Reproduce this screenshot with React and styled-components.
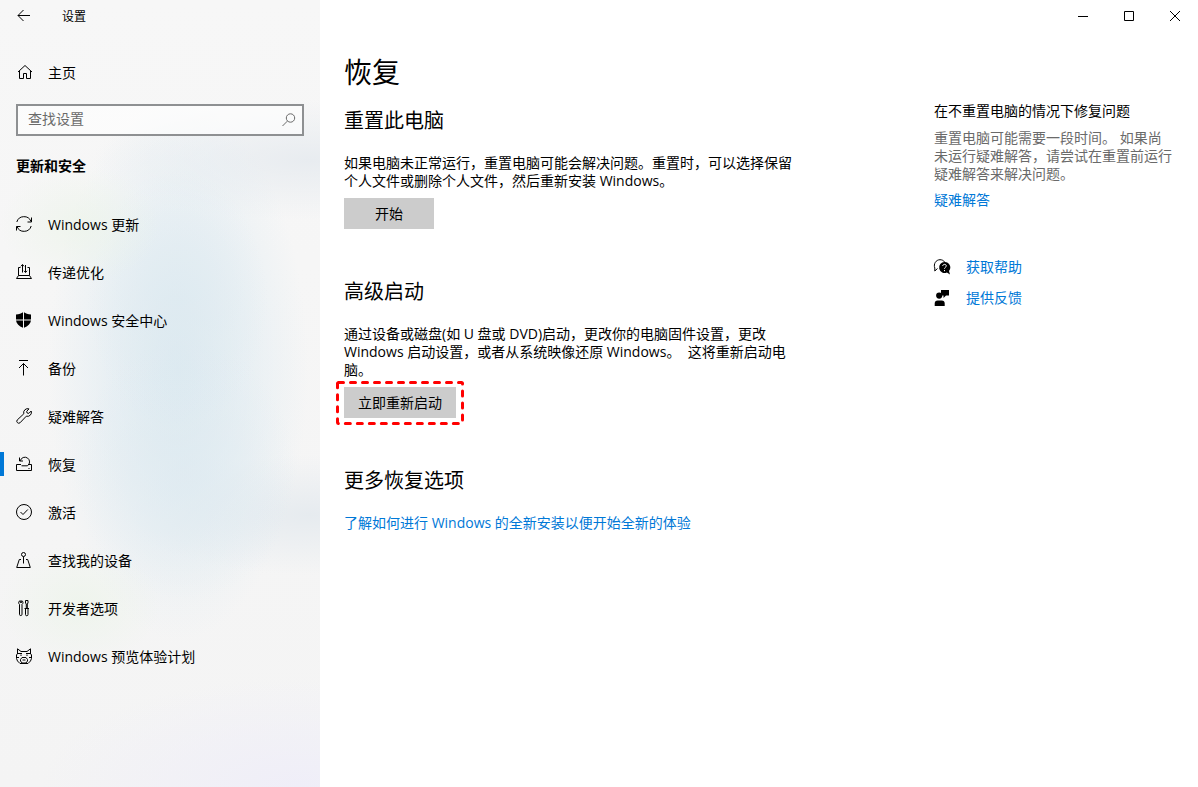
import React, { useState } from "react";
import styled, { createGlobalStyle } from "styled-components";

const GlobalStyle = createGlobalStyle`
  * {
    box-sizing: border-box;
  }

  body {
    margin: 0;
    background: #fff;
    color: #000;
    font-family: "Open Sans", "Noto Sans CJK SC", sans-serif;
    font-size: 14px;
    line-height: 18px;
  }

  button,
  input {
    font: inherit;
    color: inherit;
  }
`;

const icons = {
  back: <path d="M2 7.500h12M7.500 2L2 7.500 7.500 13" />,
  home: (
    <path d="M2 8L9 1.500 16 8M3.500 7v7.500h4v-5h3v5h4V7" />
  ),
  search: (
    <>
      <circle cx="9.500" cy="6" r="4.200" />
      <path d="M6.400 9.100L1.500 14" />
    </>
  ),
  update: (
    <>
      <path d="M.8 6A7.500 7.500 0 0 1 15 5.500M15.200 10A7.500 7.500 0 0 1 1 10.500" />
      <path d="M15.500 1.500v4.500h-4M.5 14.500V10.500h4" />
    </>
  ),
  delivery: (
    <>
      <path d="M4.500 3.500h-2v8h11v-8h-2M2.500 11.500L.5 14.500h15l-2-3" />
      <path d="M6.500 8.500v-8M4.800 2.300L6.500.6l1.500 1.700M9.500 1v7.500M8 6.800l1.500 1.600 1.600-1.600" />
    </>
  ),
  shield: (
    <path
      d="M7 .3C5.500 1.500 3 2.300 0 2.500V7.500h7zM8 .3C9.500 1.500 12 2.300 15 2.500V7.500H8zM0 8.500h7v7.300C3 14 .5 12 0 8.500zM8 8.500h7c-.5 3.500-3 5.500-7 7.300z"
      fill="currentColor"
      stroke="none"
    />
  ),
  backup: <path d="M3 .5h9M7.500 15.500v-12M3 8l4.500-4.500L12 8" />,
  wrench: (
    <path d="M13 .9a4 4 0 0 0-5.200 4.900L1.200 12a2 2 0 0 0 2.800 2.800L10.300 8.200a4 4 0 0 0 4.900-5.200l-2.400 2.400-1.700-.4-.4-1.700z" />
  ),
  recovery: (
    <>
      <path d="M5 8.500H.5v6h15v-6H12M12.500 12.500h1" />
      <path d="M5.500 9.800h6A4.700 4.700 0 1 0 4.300 4.800M3.500 1.500V5h3.500" />
    </>
  ),
  activate: (
    <>
      <circle cx="8" cy="8" r="7.500" />
      <path d="M4.500 8L7 10.500 11.800 5.500" />
    </>
  ),
  find: (
    <>
      <circle cx="7.500" cy="2.500" r="2" />
      <path d="M7.500 4.500v7M5 7.500H3.300L.7 15.500h13.600L11.700 7.500H10" />
    </>
  ),
  developer: (
    <>
      <path d="M4.300.7A2 2 0 0 0 3.500 4.300V14.300a1.200 1.200 0 0 0 2.500 0V4.300A2 2 0 0 0 5.700.7V2.500H4.300z" />
      <path d="M9.500.5h2.500v2.500l-.7 1v4.500h-1v-4.500l-.8-1zM9.500 9v5.500a1.200 1.200 0 0 0 2.500 0V9M8.500 8.500h4.500" />
    </>
  ),
  insider: (
    <>
      <path d="M1.500 5.500V.8l3.500 2.700h6L14.500.8v4.700M1.500 5.500L.5 7v3.500l1 2.500L4 15.500h8l2.500-2.500 1-2.500V7l-1-1.500" />
      <path d="M1 5.500h5M10 5.500h5M.5 9.500h2.500M13 9.500h2.500" />
      <path d="M5 6.500v1.500M11 6.500v1.500M6 9.500h4l1.500 2v1.500L10 15H6l-1.500-2v-1.500zM6.500 12h3" />
    </>
  ),
  help: (
    <>
      <path d="M3.500 9.500L.8 12V9C-.8 5 2 .7 6 .7c2 0 3.600.8 4.500 2.200" />
      <path
        d="M10.500 3a5.500 5.500 0 1 0 2.400 10.500L16 15.500l-1-3.500A5.500 5.500 0 0 0 10.500 3z"
        fill="currentColor"
        stroke="none"
      />
      <path
        d="M8.700 7c.1-2.200 3.700-2.200 3.600 0 0 1.200-1.800 1.400-1.800 2.700M10.500 11v1.200"
        stroke="#fff"
      />
    </>
  ),
  feedback: (
    <path
      d="M7 0h8v5.500h-3L9.500 8V5.500H7zM5.200 2.500a3 3 0 1 1 0 6.200 3 3 0 0 1 0-6.200zM.7 16v-2.500a3 3 0 0 1 3-3h4a3 3 0 0 1 3 3V16z"
      fill="currentColor"
      stroke="none"
    />
  ),
  minimize: <path d="M3 8.500h10" />,
  maximize: <path d="M3.500 3.500h9v9h-9z" />,
  close: <path d="M3 3l10 10M13 3L3 13" />,
};

function Icon({ name }) {
  return (
    <IconSvg viewBox="0 0 16 16" aria-hidden="true">
      {icons[name]}
    </IconSvg>
  );
}

const navItems = [
  { icon: "update", label: "Windows 更新" },
  { icon: "delivery", label: "传递优化" },
  { icon: "shield", label: "Windows 安全中心" },
  { icon: "backup", label: "备份" },
  { icon: "wrench", label: "疑难解答" },
  { icon: "recovery", label: "恢复" },
  { icon: "activate", label: "激活" },
  { icon: "find", label: "查找我的设备" },
  { icon: "developer", label: "开发者选项" },
  { icon: "insider", label: "Windows 预览体验计划" },
];

function Sidebar() {
  const [selected, setSelected] = useState("恢复");
  const [query, setQuery] = useState("");

  return (
    <StyledSidebar>
      <TitleRow>
        <BackButton type="button" aria-label="返回">
          <Icon name="back" />
        </BackButton>
        <Label>设置</Label>
      </TitleRow>
      <HomeLink href="#home">
        <Icon name="home" />
        <Label>主页</Label>
      </HomeLink>
      <SearchBox>
        <input
          type="text"
          aria-label="查找设置"
          placeholder="查找设置"
          value={query}
          onChange={(e) => setQuery(e.target.value)}
        />
        <Icon name="search" />
      </SearchBox>
      <GroupTitle>更新和安全</GroupTitle>
      <nav>
        {navItems.map((item) => (
          <NavLink
            key={item.label}
            href="#"
            $active={item.label === selected}
            onClick={() => setSelected(item.label)}
          >
            <Icon name={item.icon} />
            <Label>{item.label}</Label>
          </NavLink>
        ))}
      </nav>
    </StyledSidebar>
  );
}

function App() {
  return (
    <Window>
      <GlobalStyle />
      <Sidebar />
      <Main>
        <WindowControls>
          <ControlButton type="button" aria-label="最小化">
            <Icon name="minimize" />
          </ControlButton>
          <ControlButton type="button" aria-label="最大化">
            <Icon name="maximize" />
          </ControlButton>
          <ControlButton type="button" aria-label="关闭">
            <Icon name="close" />
          </ControlButton>
        </WindowControls>
        <Columns>
          <Content>
            <PageTitle>恢复</PageTitle>
            <Section>
              <SectionTitle>重置此电脑</SectionTitle>
              <Text>
                如果电脑未正常运行，重置电脑可能会解决问题。重置时，可以选择保留个人文件或删除个人文件，然后重新安装
                Windows。
              </Text>
              <ActionButton type="button">开始</ActionButton>
            </Section>
            <Section>
              <SectionTitle>高级启动</SectionTitle>
              <Text>
                通过设备或磁盘(如 U 盘或
                DVD)启动，更改你的电脑固件设置，更改 Windows
                启动设置，或者从系统映像还原 Windows。&nbsp; 这将重新启动电脑。
              </Text>
              <Highlight>
                <ActionButton type="button">立即重新启动</ActionButton>
                <HighlightFrame aria-hidden="true">
                  <rect x="1.5" y="1.5" rx="1" />
                </HighlightFrame>
              </Highlight>
            </Section>
            <Section>
              <SectionTitle>更多恢复选项</SectionTitle>
              <Link href="#fresh-start">
                了解如何进行 Windows 的全新安装以便开始全新的体验
              </Link>
            </Section>
          </Content>
          <Aside>
            <AsideTitle>在不重置电脑的情况下修复问题</AsideTitle>
            <AsideText>
              重置电脑可能需要一段时间。 如果尚未运行疑难解答，请尝试在重置前运行疑难解答来解决问题。
            </AsideText>
            <Link href="#troubleshoot">疑难解答</Link>
            <SupportList>
              <SupportItem>
                <Icon name="help" />
                <Link href="#help">获取帮助</Link>
              </SupportItem>
              <SupportItem>
                <Icon name="feedback" />
                <Link href="#feedback">提供反馈</Link>
              </SupportItem>
            </SupportList>
          </Aside>
        </Columns>
      </Main>
    </Window>
  );
}

export default App;

const IconSvg = styled.svg`
  width: 16px;
  height: 16px;
  flex: none;
  fill: none;
  stroke: currentColor;
  stroke-width: 1;
  overflow: visible;
`;

const Window = styled.div`
  display: flex;
  min-height: 100vh;
`;

const StyledSidebar = styled.aside`
  width: 320px;
  flex: none;
  background:
    radial-gradient(ellipse 80px 60px at 80px 225px, #ebf4e8aa 0%, #ebf4e800 100%),
    radial-gradient(ellipse 80px 60px at 80px 605px, #ebf4e8aa 0%, #ebf4e800 100%),
    radial-gradient(ellipse 90px 130px at 178px 300px, #dce9f099 0%, #dce9f000 100%),
    radial-gradient(ellipse 110px 130px at 185px 470px, #dce9f099 0%, #dce9f000 100%),
    radial-gradient(ellipse 130px 270px at 178px 370px, #dbe9f0ee 0%, #deebf288 55%, #e4eef300 100%),
    radial-gradient(ellipse 220px 60px at 310px 160px, #e8ecf0 0%, #e8ecf000 100%),
    radial-gradient(ellipse 180px 60px at 310px 515px, #e6ebef 0%, #e6ebef00 100%),
    radial-gradient(ellipse 260px 110px at 300px 787px, #efeef8 0%, #efeef800 100%),
    linear-gradient(#f7f7f7, #f4f4f4);
`;

const Label = styled.span`
  padding-top: 2px;
`;

const TitleRow = styled.div`
  display: flex;
  align-items: center;
  gap: 14px;
  height: 32px;
  font-size: 12px;
`;

const BackButton = styled.button`
  display: flex;
  align-items: center;
  justify-content: center;
  width: 48px;
  height: 32px;
  padding: 0;
  border: none;
  background: none;
`;

const HomeLink = styled.a`
  display: flex;
  align-items: center;
  gap: 16px;
  height: 48px;
  margin-top: 16px;
  padding: 0 16px;
  color: inherit;
  text-decoration: none;
`;

const SearchBox = styled.div`
  display: flex;
  align-items: center;
  height: 32px;
  margin: 8px 16px 0;
  padding: 0 5px 0 10px;
  border: 2px solid #8e9092;
  background: #ffffff99;
  color: #6a6a6a;

  & > input {
    flex: 1;
    min-width: 0;
    padding: 0 0 2px;
    border: none;
    outline: none;
    background: none;
  }

  & > input::placeholder {
    color: #6a6a6a;
    opacity: 1;
  }
`;

const GroupTitle = styled.h2`
  margin: 21px 16px 25px;
  font-size: 14px;
  font-weight: 700;
  line-height: 18px;
`;

const NavLink = styled.a`
  display: flex;
  align-items: center;
  gap: 16px;
  height: 48px;
  padding-right: 16px;
  color: inherit;
  text-decoration: none;

  &::before {
    content: "";
    width: 4px;
    height: 24px;
    margin-right: -4px;
    background: ${(props) => (props.$active ? "#0078d7" : "transparent")};
  }
`;

const Main = styled.main`
  flex: 1;
  min-width: 0;
`;

const WindowControls = styled.div`
  display: flex;
  justify-content: flex-end;
`;

const ControlButton = styled.button`
  display: flex;
  align-items: center;
  justify-content: center;
  width: 46px;
  height: 32px;
  padding: 0;
  border: none;
  background: none;
`;

const Columns = styled.div`
  display: flex;
  justify-content: space-between;
  gap: 24px;
  padding: 20px 24px 24px;
`;

const Content = styled.div`
  width: 450px;
`;

const PageTitle = styled.h1`
  margin: 0;
  font-size: 28px;
  font-weight: 400;
  line-height: 40px;
`;

const Section = styled.section`
  margin-bottom: 34px;
`;

const SectionTitle = styled.h2`
  margin: 0 0 19px;
  padding-top: 15px;
  font-size: 20px;
  font-weight: 400;
  line-height: 28px;
`;

const Text = styled.p`
  margin: 0 0 8px;
`;

const ActionButton = styled.button`
  display: block;
  min-width: 90px;
  height: 31px;
  padding: 0 14px;
  border: none;
  background: #ccc;
`;

const Highlight = styled.div`
  position: relative;
  width: fit-content;
`;

const HighlightFrame = styled.svg`
  position: absolute;
  top: -6px;
  left: -8px;
  width: calc(100% + 16px);
  height: calc(100% + 13px);
  pointer-events: none;

  & > rect {
    width: calc(100% - 3px);
    height: calc(100% - 3px);
    fill: none;
    stroke: #f00;
    stroke-width: 3;
    stroke-linecap: round;
    stroke-dasharray: 5 7;
  }
`;

const Link = styled.a`
  color: #0078d7;
  text-decoration: none;
`;

const Aside = styled.aside`
  width: 240px;
  flex: none;
  padding-top: 50px;
`;

const AsideTitle = styled.h3`
  margin: 0 0 9px;
  font-size: 14px;
  font-weight: 400;
  line-height: 18px;
`;

const AsideText = styled.p`
  margin: 0 0 8px;
  color: #6a6a6a;
`;

const SupportList = styled.ul`
  display: flex;
  flex-direction: column;
  gap: 13px;
  margin: 49px 0 0;
  padding: 0;
  list-style: none;
`;

const SupportItem = styled.li`
  display: flex;
  align-items: center;
  gap: 16px;
`;
